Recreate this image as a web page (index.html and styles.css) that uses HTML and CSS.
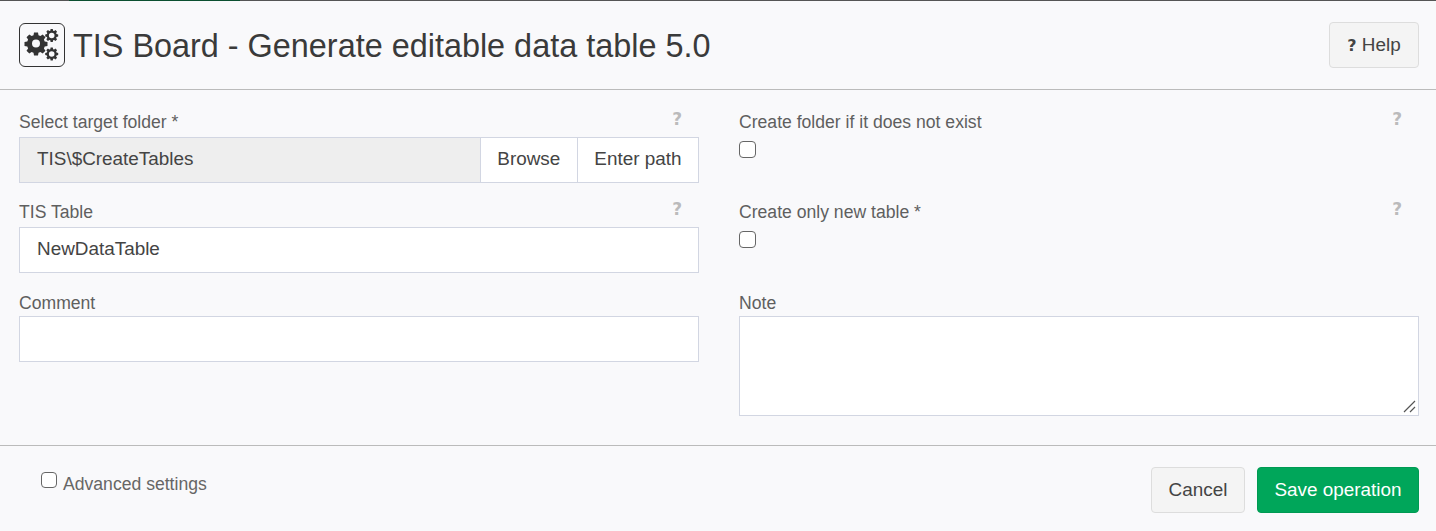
FILE: index.html
```html
<!DOCTYPE html>
<html lang="en">
<head>
<meta charset="utf-8">
<title>TIS Board - Generate editable data table 5.0</title>
<link rel="stylesheet" href="styles.css">
</head>
<body>
<div class="topstrip"><span class="strip-green"></span></div>
<header class="header">
  <div class="title-wrap">
    <span class="logo">
      <svg width="36" height="32" viewBox="0 0 36 32" fill="#333" fill-rule="evenodd">
        <path transform="translate(0 -2.500)" d="M10 6h4l.5 2.800 1.900.8 2.300-1.600 2.800 2.800-1.600 2.300.8 1.900 2.800.5v4l-2.800.5-.8 1.900 1.600 2.300-2.800 2.800-2.300-1.600-1.900.8-.5 2.800h-4l-.5-2.800-1.900-.8-2.300 1.600-2.800-2.800 1.600-2.300-.8-1.900-2.800-.5v-4l2.800-.5.8-1.900-1.600-2.300 2.800-2.800 2.300 1.600 1.900-.8zM12 13a4 4 0 1 0 0 8 4 4 0 0 0 0-8z"/>
        <path d="M26.600 0h2.200l.3 1.700 1 .4 1.400-1 1.600 1.600-1 1.400.4 1 1.700.3v2.200l-1.700.3-.4 1 1 1.400-1.600 1.600-1.400-1-1 .4-.3 1.700h-2.200l-.3-1.700-1-.4-1.400 1-1.600-1.600 1-1.400-.4-1-1.700-.3V5.400l1.700-.3.4-1-1-1.400 1.600-1.600 1.400 1 1-.4zM27.700 3.700a2.800 2.800 0 1 0 0 5.600 2.800 2.800 0 0 0 0-5.600z"/>
        <path transform="translate(0 1.500)" d="M26.600 17h2.200l.3 1.700 1 .4 1.400-1 1.600 1.600-1 1.400.4 1 1.700.3v2.200l-1.700.3-.4 1 1 1.400-1.600 1.600-1.400-1-1 .4-.3 1.700h-2.200l-.3-1.700-1-.4-1.400 1-1.600-1.600 1-1.400-.4-1-1.700-.3v-2.200l1.700-.3.4-1-1-1.400 1.600-1.600 1.400 1 1-.4zM27.700 20.700a2.800 2.800 0 1 0 0 5.600 2.800 2.800 0 0 0 0-5.600z"/>
      </svg>
    </span>
    <h1 class="title">TIS Board - Generate editable data table 5.0</h1>
  </div>
  <button class="btn btn-light btn-help" type="button"><b class="q">?</b> Help</button>
</header>

<main class="form-grid">
  <div class="col">
    <div class="field field-a">
      <div class="label-row"><label class="label">Select target folder *</label><b class="hint">?</b></div>
      <div class="input-group">
        <div class="control control-readonly">TIS\$CreateTables</div>
        <div class="addon">Browse</div>
        <div class="addon">Enter path</div>
      </div>
    </div>
    <div class="field field-b">
      <div class="label-row"><label class="label">TIS Table</label><b class="hint">?</b></div>
      <div class="control">NewDataTable</div>
    </div>
    <div class="field">
      <div class="label-row label-row-tight"><label class="label">Comment</label></div>
      <div class="control"></div>
    </div>
  </div>
  <div class="col">
    <div class="field field-a">
      <div class="label-row"><label class="label">Create folder if it does not exist</label><b class="hint">?</b></div>
      <div class="check-wrap"><span class="check"></span></div>
    </div>
    <div class="field field-b">
      <div class="label-row"><label class="label">Create only new table *</label><b class="hint">?</b></div>
      <div class="check-wrap"><span class="check"></span></div>
    </div>
    <div class="field">
      <div class="label-row label-row-tight"><label class="label">Note</label></div>
      <div class="control control-area">
        <svg class="grip" width="13" height="13" viewBox="0 0 13 13" stroke="#555" stroke-width="1.200"><path d="M1 12 12 1M7 12l5-5"/></svg>
      </div>
    </div>
  </div>
</main>

<footer class="footer">
  <div class="advanced"><span class="check check-small"></span><span class="adv-label">Advanced settings</span></div>
  <div class="actions">
    <button class="btn btn-light" type="button">Cancel</button>
    <button class="btn btn-save" type="button">Save operation</button>
  </div>
</footer>
</body>
</html>
```
FILE: styles.css
```css
* { box-sizing: border-box; }
html, body { margin: 0; height: 100%; }
body {
  width: 1436px;
  height: 531px;
  overflow: hidden;
  background: #f9f9fb;
  color: #333;
  font-family: "Liberation Sans", Arial, sans-serif;
  font-size: 18.900px;
  display: flex;
  flex-direction: column;
}
.topstrip { height: 1px; background: #555; flex: none; display: flex; padding-left: 69px; }
.strip-green { width: 171px; background: #0b4f30; }
.header {
  height: 89px;
  flex: none;
  border-bottom: 1px solid #bbb;
  padding: 21px 17px 0 19px;
  display: flex;
  justify-content: space-between;
  align-items: flex-start;
}
.title-wrap { display: flex; align-items: center; gap: 8px; height: 46px; }
.logo {
  width: 46px; height: 44px;
  border: 1px solid #333;
  border-radius: 6px;
  display: flex; align-items: center; justify-content: center;
}
.title { margin: 2px 0 0; font-size: 32.400px; font-weight: 400; line-height: 46px; color: #3a3a3a; }
.btn {
  font: inherit;
  height: 46px;
  border-radius: 4px;
  padding: 0 16.500px;
  cursor: pointer;
}
.btn-light { background: #f4f4f4; border: 1px solid #ddd; color: #444; }
.btn-help { width: 90px; padding: 0; }
.q { font-weight: 900; font-family: "DejaVu Sans", sans-serif; font-size: 16px; }
.btn-save { background: #00a65a; border: 1px solid #009a53; color: #fff; }
.form-grid {
  flex: none;
  height: 356px;
  padding: 20px 17px 0 19px;
  border-bottom: 1px solid #bbb;
  display: grid;
  grid-template-columns: 680px 680px;
  column-gap: 40px;
}
.col { display: flex; flex-direction: column; }
.field { display: flex; flex-direction: column; }
.field-a { height: 90px; }
.field-b { height: 91px; }
.label-row { height: 27px; display: flex; justify-content: space-between; align-items: flex-start; padding-top: 2px; }
.label-row-tight { height: 25px; }
.label { font-size: 17.600px; color: #5f5f5f; line-height: 21px; }
.hint {
  font-family: "DejaVu Sans", sans-serif;
  font-size: 17px;
  font-weight: 900;
  color: #bbb;
  line-height: 17px;
  margin: -1px 17px 0 0;
}
.control {
  height: 46px;
  background: #fff;
  border: 1px solid #d2d6e2;
  padding: 0 17px;
  line-height: 41px;
  color: #444;
}
.control-readonly { flex: 1; background: #eee; border-right: 0; }
.control-area { height: 100px; position: relative; }
.grip { position: absolute; right: 2px; bottom: 2px; }
.input-group { display: flex; height: 46px; }
.addon {
  background: #fff;
  border: 1px solid #d2d6e2;
  padding: 0 16.500px;
  line-height: 41px;
  color: #444;
}
.addon + .addon { border-left: 0; }
.check-wrap { height: 46px; padding-top: 4px; }
.check {
  display: block;
  width: 17px; height: 17px;
  background: #fff;
  border: 1px solid #666;
  border-radius: 4px;
}
.check-small { width: 16px; height: 16px; }
.footer {
  flex: 1;
  display: flex;
  justify-content: space-between;
  padding: 21px 17px 0 41px;
}
.advanced { display: flex; align-items: flex-start; gap: 6px; padding-top: 5px; }
.adv-label { color: #666; font-size: 17.600px; line-height: 24px; }
.actions { display: flex; gap: 12px; }
```
